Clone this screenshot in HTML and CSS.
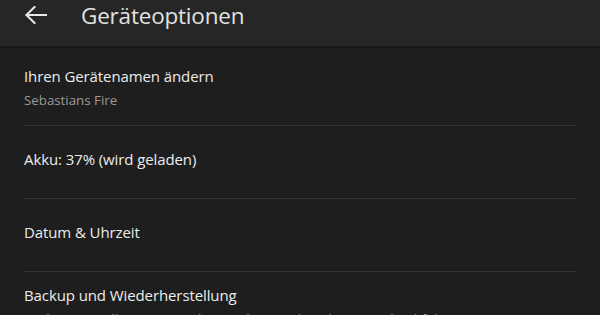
FILE: index.html
```html
<!DOCTYPE html>
<html lang="de">

<head>
    <meta charset="UTF-8">
    <meta name="viewport" content="width=device-width, initial-scale=1.0">
    <title>Geräteoptionen</title>
    <link rel="stylesheet" href="styles.css">
</head>

<body>

    <div class="toolbar">
        <button class="back-btn" aria-label="Zurück">
            <svg width="22" height="18" viewBox="0 0 22 18">
                <path d="M1.5 9H21M9.5 1L1.5 9L9.5 17" fill="none" stroke="#e8e8e8" stroke-width="2.1" stroke-linecap="square"/>
            </svg>
        </button>
        <h1 class="toolbar-title">Geräteoptionen</h1>
    </div>

    <ul class="settings-list">
        <li class="setting two-line">
            <span class="setting-title">Ihren Gerätenamen ändern</span>
            <span class="setting-sub">Sebastians Fire</span>
        </li>
        <li class="setting">
            <span class="setting-title">Akku: 37% (wird geladen)</span>
        </li>
        <li class="setting">
            <span class="setting-title">Datum &amp; Uhrzeit</span>
        </li>
        <li class="setting two-line">
            <span class="setting-title">Backup und Wiederherstellung</span>
            <span class="setting-sub">Backup-Einstellungen verwalten und ein Backup Ihres Fire durchführen</span>
        </li>
    </ul>

</body>
</html>
```

FILE: styles.css
```css
body {
    margin: 0;
    font-family: "Open Sans", "Noto Sans", sans-serif;
    background-color: #1e1e1e;
    color: #e6e6e6;
    overflow: hidden;
}

.toolbar {
    display: flex;
    align-items: flex-start;
    height: 46px;
    background-color: #262626;
    box-shadow: 0 1px 3px rgba(0, 0, 0, 0.35);
    position: relative;
}

.back-btn {
    background: none;
    border: none;
    padding: 0;
    margin: 6px 0 0 25px;
    width: 22px;
    height: 18px;
    cursor: pointer;
}

.back-btn svg {
    display: block;
}

.toolbar-title {
    margin: 0 0 0 34px;
    font-size: 22.5px;
    font-weight: 400;
    line-height: 31px;
    color: #e2e2e2;
    letter-spacing: -0.2px;
}

.settings-list {
    list-style: none;
    margin: 0 24px;
    padding: 7px 0 0;
}

.setting {
    display: flex;
    flex-direction: column;
    justify-content: center;
    box-sizing: border-box;
    height: 73px;
    padding-bottom: 6px;
    border-bottom: 1px solid #333333;
}

.setting.two-line {
    justify-content: flex-start;
    padding: 12px 0 0;
}

.setting-title {
    font-size: 15px;
    line-height: 22px;
    color: #ececec;
    letter-spacing: -0.1px;
}

.setting-sub {
    font-size: 13.3px;
    line-height: 22px;
    margin-top: 2px;
    color: #9a9a9a;
    white-space: nowrap;
}
```
